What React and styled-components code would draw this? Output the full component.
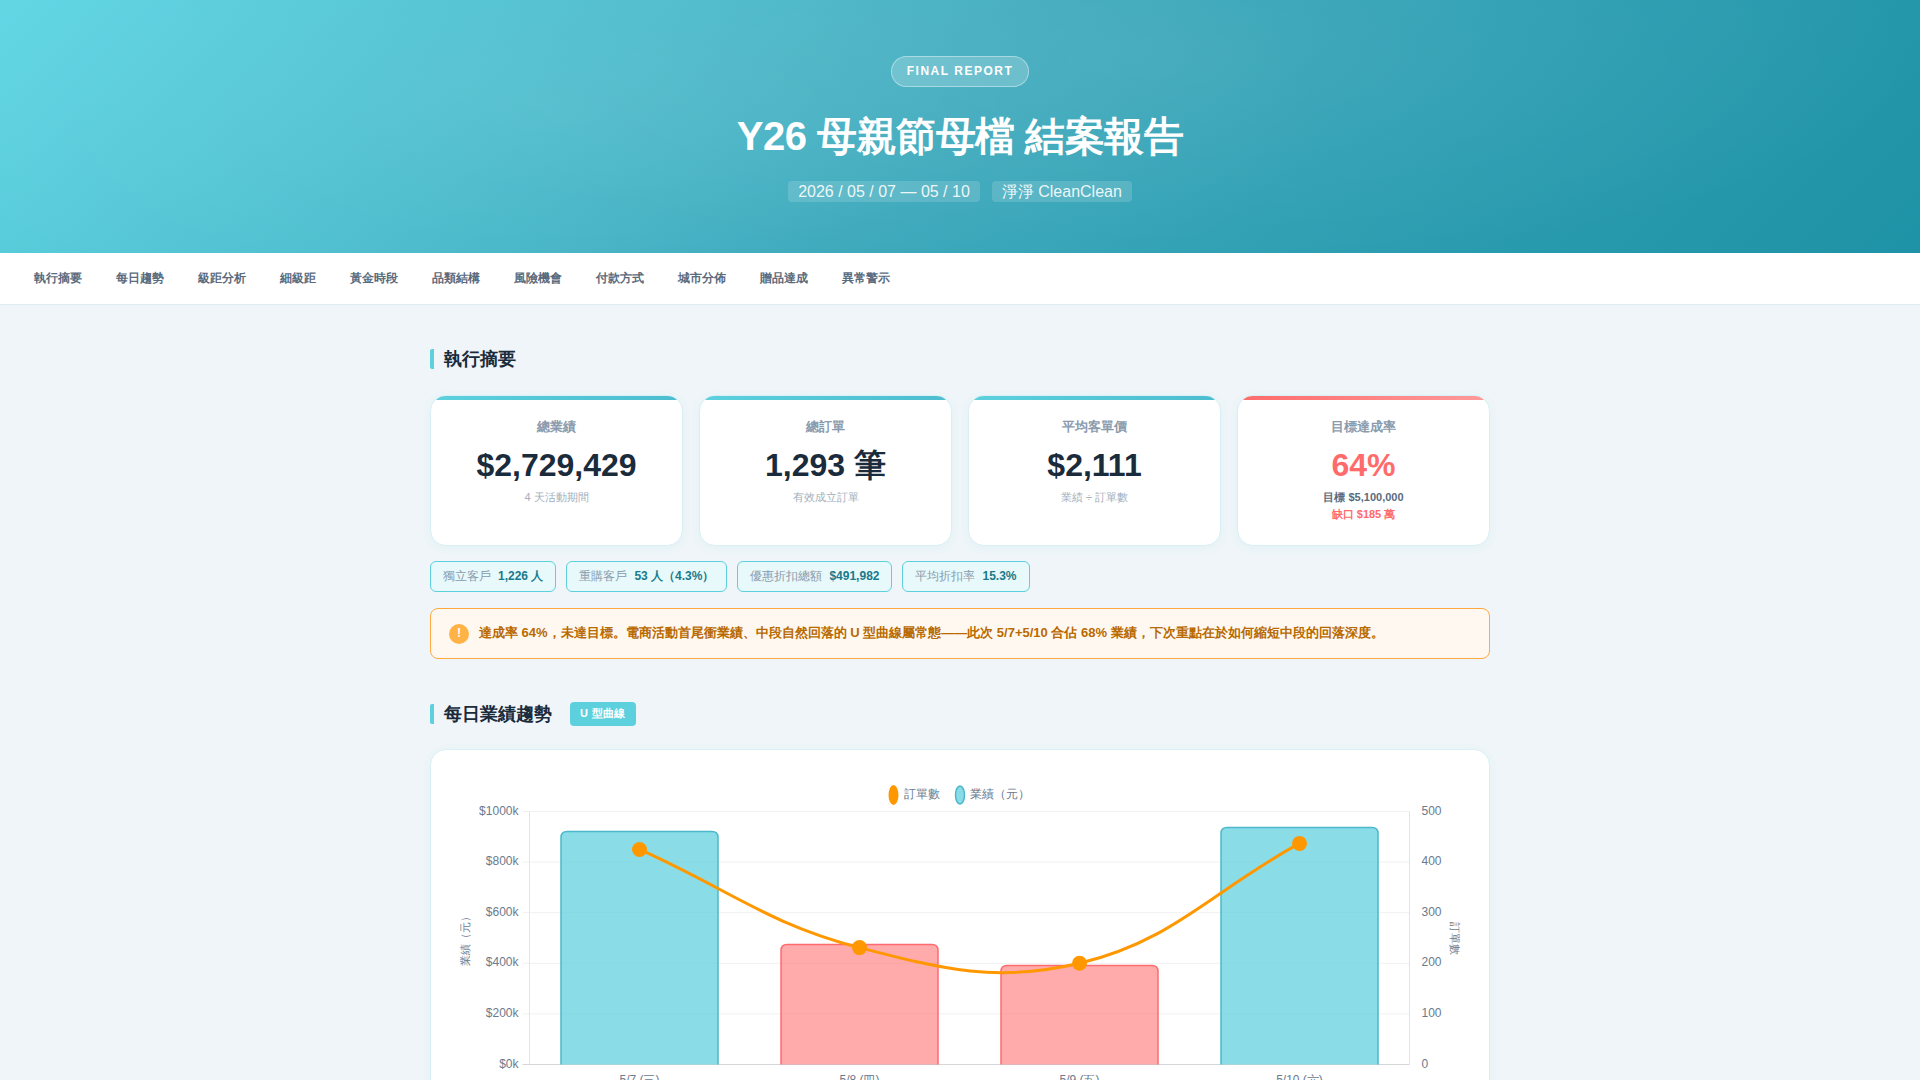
import React from "react";
import styled, { createGlobalStyle } from "styled-components";

const GlobalStyle = createGlobalStyle`
	* { box-sizing: border-box; }
	html, body { margin: 0; padding: 0; }
	body {
		background: #eff5f8;
		color: #1a2b3c;
		font-family: "Liberation Sans", sans-serif;
		line-height: 1.6;
	}
`;

const Hero = styled.header`
	height: 253px;
	padding-top: 56px;
	display: flex;
	flex-direction: column;
	align-items: center;
	color: #fff;
	background:
		radial-gradient(ellipse 800px 260px at 28% 42%, rgba(255,255,255,.07), transparent),
		radial-gradient(ellipse 800px 220px at 60% 22%, rgba(255,255,255,.07), transparent),
		linear-gradient(135deg, #60d6e4 0%, #3aa8bb 50%, #1e92a6 100%);
`;

const ReportBadge = styled.div`
	padding: 5px 15px;
	font-size: 12px;
	font-weight: 700;
	letter-spacing: 1.5px;
	background: rgba(255,255,255,.2);
	border: 1px solid rgba(255,255,255,.4);
	border-radius: 20px;
`;

const HeroTitle = styled.h1`
	margin: 24px 0 20px;
	font-size: 40px;
	line-height: 50px;
	font-weight: 700;
	letter-spacing: -0.5px;
`;

const HeroMeta = styled.div`
	display: flex;
	gap: 12px;
`;

const MetaPill = styled.span`
	height: 21px;
	padding: 0 10px;
	font-size: 16px;
	line-height: 21px;
	color: rgba(255,255,255,.9);
	background: rgba(255,255,255,.15);
	border-radius: 4px;
`;

const Nav = styled.nav`
	padding: 16px 17px;
	display: flex;
	background: #fff;
	border-bottom: 1px solid #dcedf4;
`;

const NavItem = styled.a`
	padding: 0 17px;
	font-size: 12px;
	font-weight: 700;
	color: #5a6b7d;
`;

const Main = styled.main`
	width: 1060px;
	margin: 0 auto;
	padding: 44px 0 40px;
`;

const SectionHead = styled.div`
	height: 20px;
	display: flex;
	align-items: center;
	margin-bottom: ${({ $gap }) => $gap}px;
`;

const SectionTitle = styled.h2`
	margin: 0;
	padding-left: 10px;
	border-left: 4px solid #5dd0de;
	border-radius: 2px;
	height: 20px;
	display: flex;
	align-items: center;
	font-size: 18px;
	font-weight: 700;
	color: #1a2b3c;
`;

const SectionTag = styled.span`
	margin-left: 18px;
	padding: 3px 10px;
	font-size: 11px;
	font-weight: 700;
	letter-spacing: .3px;
	color: #fff;
	background: #5dd0de;
	border-radius: 4px;
`;

const KpiGrid = styled.div`
	display: grid;
	grid-template-columns: repeat(4, 1fr);
	gap: 16px;
	margin-bottom: 15px;
`;

const KpiCard = styled.div`
	position: relative;
	overflow: hidden;
	padding: 21px 16px 22px;
	text-align: center;
	background: #fff;
	border: 1px solid #d8f0f5;
	border-radius: 16px;
	box-shadow: 0 2px 8px rgba(93,208,222,.08);

	&::before {
		content: "";
		position: absolute;
		top: 0;
		left: 0;
		right: 0;
		height: 4px;
		background: ${({ $alert }) =>
			$alert
				? "linear-gradient(90deg, #ff6b6b, #ff9a9a)"
				: "linear-gradient(90deg, #5dd0de, #4bbdcf)"};
	}
`;

const KpiLabel = styled.div`
	font-size: 13px;
	line-height: 20px;
	font-weight: 600;
	color: #8a9bad;
	margin-bottom: 9px;
`;

const KpiValue = styled.div`
	font-size: 32px;
	line-height: 38px;
	font-weight: 700;
	color: ${({ $alert }) => ($alert ? "#ff6b6b" : "#1a2b3c")};
	margin-bottom: 5px;
`;

const KpiNote = styled.div`
	font-size: 11px;
	line-height: 17px;
	color: #a3afbc;
`;

const KpiTarget = styled.div`
	font-size: 11px;
	line-height: 17px;
	font-weight: 700;
	color: ${({ $alert }) => ($alert ? "#ff6b6b" : "#5a6b7d")};
`;

const ChipRow = styled.div`
	display: flex;
	gap: 10px;
	margin-bottom: 16px;
`;

const Chip = styled.div`
	padding: 5px 12px;
	display: flex;
	align-items: center;
	gap: 7px;
	font-size: 12px;
	color: #8a9bad;
	background: #e8f9fc;
	border: 1px solid #5dd0de;
	border-radius: 6px;
`;

const ChipValue = styled.b`
	color: #1a7a8a;
`;

const Notice = styled.div`
	padding: 14px 18px;
	display: flex;
	align-items: center;
	gap: 10px;
	margin-bottom: 45px;
	font-size: 13px;
	font-weight: 700;
	color: #b86a00;
	background: #fff8f0;
	border: 1px solid #ffa940;
	border-radius: 8px;
`;

const NoticeIcon = styled.span`
	flex: none;
	width: 20px;
	height: 20px;
	display: flex;
	align-items: center;
	justify-content: center;
	font-size: 12px;
	color: #fff;
	background: #ffb347;
	border-radius: 50%;
`;

const ChartCard = styled.div`
	height: 420px;
	padding: 24px;
	background: #fff;
	border: 1px solid #d8f0f5;
	border-radius: 16px;
	box-shadow: 0 2px 8px rgba(93,208,222,.08);
`;

const ChartSvg = styled.svg`
	display: block;
	font-family: "Liberation Sans", sans-serif;
	font-size: 12px;
	fill: #6b7a8d;
`;

const AxisTitle = styled.text`
	font-size: 11px;
`;

const navLinks = ["執行摘要", "每日趨勢", "級距分析", "細級距", "黃金時段", "品類結構", "風險機會", "付款方式", "城市分佈", "贈品達成", "異常警示"];

const chips = [
  ["獨立客戶", "1,226 人"],
  ["重購客戶", "53 人（4.3%）"],
  ["優惠折扣總額", "$491,982"],
  ["平均折扣率", "15.3%"],
];

// daily numbers behind the chart; sales in thousands
const days = [
  { label: "5/7 (三)", sales: 921, orders: 425 },
  { label: "5/8 (四)", sales: 474, orders: 231, low: true },
  { label: "5/9 (五)", sales: 391, orders: 200, low: true },
  { label: "5/10 (六)", sales: 937, orders: 437 },
];

const plot = { left: 74.5, right: 954.5, top: 37.5, bottom: 290.5 };
const plotHeight = plot.bottom - plot.top;
const slot = (plot.right - plot.left) / days.length;
const barWidth = 157;

const salesY = (v) => plot.bottom - (v / 1000) * plotHeight;
const ordersY = (v) => plot.bottom - (v / 500) * plotHeight;
const centerX = (i) => plot.left + slot * (i + 0.5);
const points = days.map((d, i) => ({ x: centerX(i), y: ordersY(d.orders) }));

// same curve as a chart.js line with tension 0.4
const smoothLine = (pts, tension = 0.4) => {
  const controls = pts.map((p, i) => {
    const prev = pts[i - 1] || p;
    const next = pts[i + 1] || p;
    const d01 = Math.hypot(p.x - prev.x, p.y - prev.y);
    const d12 = Math.hypot(next.x - p.x, next.y - p.y);
    const fa = (tension * d01) / (d01 + d12);
    const fb = (tension * d12) / (d01 + d12);
    return {
      inX: p.x - fa * (next.x - prev.x),
      inY: p.y - fa * (next.y - prev.y),
      outX: p.x + fb * (next.x - prev.x),
      outY: p.y + fb * (next.y - prev.y),
    };
  });
  return pts.reduce((path, p, i) => {
    if (i === 0) return `M${p.x} ${p.y}`;
    const a = controls[i - 1];
    const b = controls[i];
    return `${path} C${a.outX} ${a.outY} ${b.inX} ${b.inY} ${p.x} ${p.y}`;
  }, "");
};

const barPath = (x, top, w, bottom, r = 6) =>
  `M${x} ${bottom} V${top + r} Q${x} ${top} ${x + r} ${top} H${x + w - r} Q${x + w} ${top} ${x + w} ${top + r} V${bottom}`;

const DailyChart = () => (
  <ChartSvg width="1010" height="372" viewBox="0 0 1010 372">
    <ellipse cx="438.5" cy="21" rx="5" ry="10" fill="#ff9800" />
    <text x="449" y="24">訂單數</text>
    <ellipse cx="505" cy="21" rx="4.5" ry="9" fill="#88dbe7" stroke="#4bb8cc" strokeWidth="1.5" />
    <text x="515" y="24">業績（元）</text>

    {[0, 1, 2, 3, 4, 5].map((n) => {
      const y = plot.bottom - (n * plotHeight) / 5;
      return (
        <g key={n}>
          <line x1={plot.left - 7} x2={plot.right} y1={y} y2={y} stroke={n === 0 ? "#d4d7da" : "#f0f1f3"} />
          <text x={plot.left - 11} y={y + 3} textAnchor="end">${n * 200}k</text>
          <text x={plot.right + 12} y={y + 3}>{n * 100}</text>
        </g>
      );
    })}
    <line x1={plot.left} x2={plot.left} y1={plot.top} y2={plot.bottom} stroke="#e2e4e7" />
    <line x1={plot.right} x2={plot.right} y1={plot.top} y2={plot.bottom} stroke="#e2e4e7" />

    <AxisTitle transform="translate(14 164) rotate(-90)" textAnchor="middle">業績（元）</AxisTitle>
    <AxisTitle transform="translate(996 164) rotate(90)" textAnchor="middle">訂單數</AxisTitle>

    {days.map((d, i) => (
      <path
        key={d.label}
        d={barPath(centerX(i) - barWidth / 2, salesY(d.sales), barWidth, plot.bottom)}
        fill={d.low ? "rgba(255,107,107,.57)" : "rgba(93,208,222,.72)"}
        stroke={d.low ? "#ff6b6f" : "#4bb8cc"}
        strokeWidth="1.5"
      />
    ))}

    <path d={smoothLine(points)} fill="none" stroke="#ff9800" strokeWidth="3" />
    {points.map((p) => (
      <circle key={p.x} cx={p.x} cy={p.y} r="7.5" fill="#ff9800" />
    ))}

    {days.map((d, i) => (
      <text key={d.label} x={centerX(i)} y={310} textAnchor="middle">{d.label}</text>
    ))}
  </ChartSvg>
);

export default function App() {
  return (
    <>
      <GlobalStyle />
      <Hero>
        <ReportBadge>FINAL REPORT</ReportBadge>
        <HeroTitle>Y26 母親節母檔 結案報告</HeroTitle>
        <HeroMeta>
          <MetaPill>2026 / 05 / 07 — 05 / 10</MetaPill>
          <MetaPill>淨淨 CleanClean</MetaPill>
        </HeroMeta>
      </Hero>
      <Nav>
        {navLinks.map((link) => (
          <NavItem key={link}>{link}</NavItem>
        ))}
      </Nav>
      <Main>
        <SectionHead $gap={26}>
          <SectionTitle>執行摘要</SectionTitle>
        </SectionHead>
        <KpiGrid>
          <KpiCard>
            <KpiLabel>總業績</KpiLabel>
            <KpiValue>$2,729,429</KpiValue>
            <KpiNote>4 天活動期間</KpiNote>
          </KpiCard>
          <KpiCard>
            <KpiLabel>總訂單</KpiLabel>
            <KpiValue>1,293 筆</KpiValue>
            <KpiNote>有效成立訂單</KpiNote>
          </KpiCard>
          <KpiCard>
            <KpiLabel>平均客單價</KpiLabel>
            <KpiValue>$2,111</KpiValue>
            <KpiNote>業績 ÷ 訂單數</KpiNote>
          </KpiCard>
          <KpiCard $alert>
            <KpiLabel>目標達成率</KpiLabel>
            <KpiValue $alert>64%</KpiValue>
            <KpiTarget>目標 $5,100,000</KpiTarget>
            <KpiTarget $alert>缺口 $185 萬</KpiTarget>
          </KpiCard>
        </KpiGrid>
        <ChipRow>
          {chips.map(([label, value]) => (
            <Chip key={label}>
              {label}
              <ChipValue>{value}</ChipValue>
            </Chip>
          ))}
        </ChipRow>
        <Notice>
          <NoticeIcon>!</NoticeIcon>
          達成率 64%，未達目標。電商活動首尾衝業績、中段自然回落的 U 型曲線屬常態——此次 5/7+5/10 合佔 68% 業績，下次重點在於如何縮短中段的回落深度。
        </Notice>
        <SectionHead $gap={25}>
          <SectionTitle>每日業績趨勢</SectionTitle>
          <SectionTag>U 型曲線</SectionTag>
        </SectionHead>
        <ChartCard>
          <DailyChart />
        </ChartCard>
      </Main>
    </>
  );
}
